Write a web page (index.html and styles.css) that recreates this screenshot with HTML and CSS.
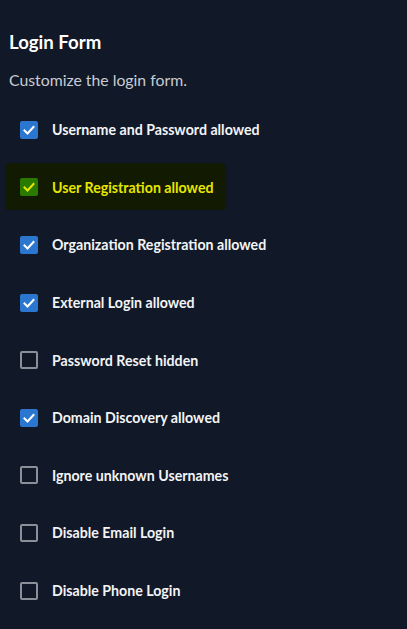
FILE: index.html
```html
<!DOCTYPE html>
<html>
<head>
<meta charset="utf-8">
<link rel="stylesheet" href="styles.css">
</head>
<body>
<main class="panel">
  <h2 class="title">Login Form</h2>
  <p class="subtitle">Customize the login form.</p>
  <ul class="options">
    <li class="option"><span class="box checked"><svg viewBox="0 0 18 18"><path d="M4.5 9.5l3 3 6-6.5"/></svg></span><span class="label">Username and Password allowed</span></li>
    <li class="option highlight"><span class="box checked"><svg viewBox="0 0 18 18"><path d="M4.5 9.5l3 3 6-6.5"/></svg></span><span class="label">User Registration allowed</span></li>
    <li class="option"><span class="box checked"><svg viewBox="0 0 18 18"><path d="M4.5 9.5l3 3 6-6.5"/></svg></span><span class="label">Organization Registration allowed</span></li>
    <li class="option"><span class="box checked"><svg viewBox="0 0 18 18"><path d="M4.5 9.5l3 3 6-6.5"/></svg></span><span class="label">External Login allowed</span></li>
    <li class="option"><span class="box"></span><span class="label">Password Reset hidden</span></li>
    <li class="option"><span class="box checked"><svg viewBox="0 0 18 18"><path d="M4.5 9.5l3 3 6-6.5"/></svg></span><span class="label">Domain Discovery allowed</span></li>
    <li class="option"><span class="box"></span><span class="label">Ignore unknown Usernames</span></li>
    <li class="option"><span class="box"></span><span class="label">Disable Email Login</span></li>
    <li class="option"><span class="box"></span><span class="label">Disable Phone Login</span></li>
  </ul>
</main>
</body>
</html>
```
FILE: styles.css
```css
html, body {
  margin: 0;
  padding: 0;
  background: #111827;
}
body {
  font-family: Lato, "Noto Sans", sans-serif;
  color: #f3f4f6;
  width: 407px;
  height: 629px;
  overflow: hidden;
}
.panel {
  padding: 29px 9px 0 9px;
}
.title {
  margin: 0;
  font-size: 18.6px;
  font-weight: 700;
  line-height: 26px;
  color: #ffffff;
}
.subtitle {
  margin: 14px 0 0 0;
  font-size: 15.8px;
  line-height: 22px;
  color: #c9ccd2;
}
.options {
  list-style: none;
  margin: 10px 0 0 0;
  padding: 0;
}
.option {
  position: relative;
  display: flex;
  align-items: center;
  gap: 14px;
  height: 57.6px;
  padding-left: 11px;
  font-size: 14.2px;
  font-weight: 700;
}
.option.highlight::before {
  content: "";
  position: absolute;
  left: -3px;
  top: 4px;
  width: 220px;
  height: 47px;
  background: #131a02;
  border-radius: 3px 6px 4px 2px;
  z-index: 0;
}
.box {
  position: relative;
  z-index: 1;
  box-sizing: border-box;
  width: 18px;
  height: 18px;
  border: 2px solid #8b9098;
  border-radius: 2px;
  display: flex;
  align-items: center;
  justify-content: center;
  flex: none;
}
.box.checked {
  border: none;
  background: #2b76cf;
}
.box svg {
  width: 18px;
  height: 18px;
}
.box svg path {
  fill: none;
  stroke: #ffffff;
  stroke-width: 2;
  stroke-linecap: square;
}
.label {
  position: relative;
  z-index: 1;
}
.highlight .box.checked {
  background: #2a7a00;
}
.highlight .box svg path {
  stroke: #e8e800;
}
.highlight .label {
  color: #e6e600;
}
```
